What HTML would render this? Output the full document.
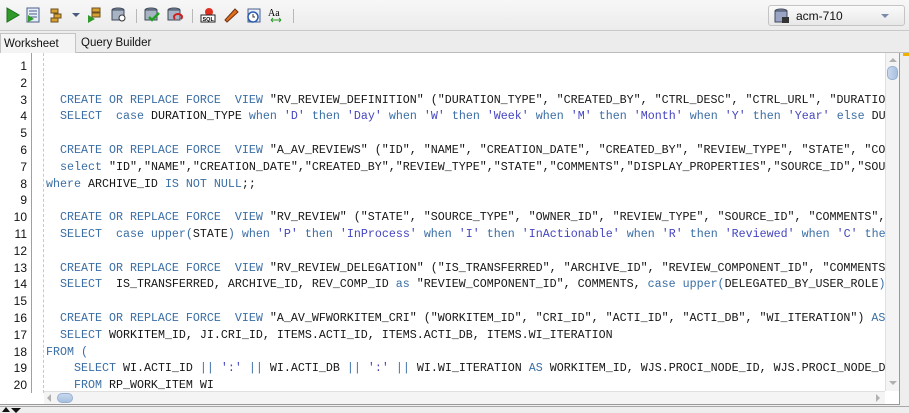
<!DOCTYPE html>
<html><head><meta charset="utf-8"><style>
*{margin:0;padding:0;box-sizing:border-box}
body{width:909px;height:413px;overflow:hidden;background:#eeeeee;font-family:"Liberation Sans",sans-serif;position:relative}
.tb{position:absolute;left:0;top:0;width:909px;height:31px;background:linear-gradient(#f7f7f7,#ececec);border-bottom:1px solid #c8c8c8}
.ic{position:absolute;top:7px;width:16px;height:16px}
.sep{position:absolute;top:9px;width:1px;height:14px;background:#b8b8b8}
.combo{position:absolute;left:768px;top:5px;width:137px;height:21px;border:1px solid #c4c4c4;border-radius:3px;background:linear-gradient(#fafafa,#e8e8e8);font-size:12px;color:#111}
.tabs{position:absolute;left:0;top:32px;width:909px;height:21px;background:#ececec;border-bottom:1px solid #bdbdbd}
.tab1{position:absolute;left:0;top:1px;width:76px;height:20px;border:1px solid #c4c4c4;border-bottom:none;background:#f4f4f4;font-size:11.5px;padding:4px 0 0 3px;color:#111}
.tab2{position:absolute;left:81px;top:5px;font-size:11.5px;color:#111}
.ed{position:absolute;left:0;top:53px;width:900px;height:352px;background:#fff;border-right:1px solid #9a9a9a;border-bottom:1px solid #9a9a9a;overflow:hidden}
.gut{position:absolute;left:0;top:0;width:32px;height:340px;border-right:1px solid #a0a0a0;background:#fff}
.dash{position:absolute;left:43px;top:0;height:340px;border-left:1px dashed #c8c8c8}
.ln{position:absolute;right:4px;width:30px;text-align:right;font-size:12px;color:#111;height:17px;line-height:17px}
.code{position:absolute;left:46px;top:0;width:839px;height:338px;overflow:hidden}
.l{position:absolute;left:0;white-space:pre;font-family:"Liberation Mono",monospace;font-size:11.67px;line-height:17px;height:17px;color:#161616}
.k{color:#3a6ea5}.s{color:#4545c0}
.vs{position:absolute;left:885px;top:0;width:14px;height:338px;background:#f4f4f4;border-left:1px solid #e0e0e0}
.hs{position:absolute;left:44px;top:338px;width:841px;height:13px;background:#f4f4f4;border-top:1px solid #e0e0e0}
</style></head><body>
<div class="tb">
<svg class="ic" style="left:5px" viewBox="0 0 16 16"><path d="M2 1 L14 8 L2 15Z" fill="#2f9a2a" stroke="#1f6e1c"/></svg>
<svg class="ic" style="left:25px" viewBox="0 0 16 16"><rect x="2" y="1" width="12" height="14" fill="#e8eef8" stroke="#4a5f8a"/><path d="M4 4h8M4 7h8M4 10h8" stroke="#4a5f8a"/><path d="M3 8 L9 12 L3 15Z" fill="#2f9a2a"/></svg>
<svg class="ic" style="left:49px" viewBox="0 0 16 16"><rect x="2" y="2" width="7" height="4" fill="#d8a030" stroke="#6a5020"/><rect x="5" y="7" width="7" height="4" fill="#d8a030" stroke="#6a5020"/><rect x="2" y="11" width="7" height="4" fill="#d8a030" stroke="#6a5020"/></svg>
<div style="position:absolute;left:72px;top:13px;border:4px solid transparent;border-top:4px solid #4a5a7a"></div>
<svg class="ic" style="left:87px" viewBox="0 0 16 16"><rect x="5" y="1" width="8" height="4" fill="#d8a030" stroke="#6a5020"/><rect x="5" y="6" width="8" height="4" fill="#d8a030" stroke="#6a5020"/><path d="M1 8 L8 12 L1 16Z" fill="#2f9a2a"/></svg>
<svg class="ic" style="left:111px" viewBox="0 0 16 16"><ellipse cx="7" cy="3" rx="6" ry="2" fill="#8090a8" stroke="#404a5a"/><rect x="1" y="3" width="12" height="10" fill="#a8b4c4" stroke="#404a5a"/><circle cx="11" cy="11" r="3" fill="#fff" stroke="#333"/></svg>
<div class="sep" style="left:136px"></div>
<svg class="ic" style="left:144px" viewBox="0 0 16 16"><ellipse cx="7" cy="3" rx="6" ry="2" fill="#8090a8" stroke="#404a5a"/><rect x="1" y="3" width="12" height="10" fill="#a8b4c4" stroke="#404a5a"/><path d="M5 10 L8 13 L15 6" stroke="#22a022" stroke-width="2.5" fill="none"/></svg>
<svg class="ic" style="left:167px" viewBox="0 0 16 16"><ellipse cx="7" cy="3" rx="6" ry="2" fill="#8090a8" stroke="#404a5a"/><rect x="1" y="3" width="12" height="10" fill="#a8b4c4" stroke="#404a5a"/><path d="M8 12 a4 3 0 1 1 6 0" stroke="#d02020" stroke-width="2" fill="none"/></svg>
<div class="sep" style="left:192px"></div>
<svg class="ic" style="left:200px" viewBox="0 0 16 16"><circle cx="9" cy="5" r="4" fill="#e03020"/><rect x="1" y="8" width="14" height="7" fill="#fff" stroke="#222"/><text x="2.5" y="14" font-size="5.5" font-family="Liberation Sans" font-weight="bold">SQL</text></svg>
<svg class="ic" style="left:224px" viewBox="0 0 16 16"><path d="M3 15 L1 13 L11 2 L14 5Z" fill="#e07020" stroke="#703010"/></svg>
<svg class="ic" style="left:246px" viewBox="0 0 16 16"><rect x="2" y="2" width="12" height="13" fill="#e8eef8" stroke="#4a5f8a"/><circle cx="7" cy="10" r="5" fill="#fff" stroke="#2a5ab0" stroke-width="1.5"/><path d="M7 7v3h2" stroke="#333" fill="none"/></svg>
<svg class="ic" style="left:268px" viewBox="0 0 16 16"><text x="0" y="9" font-size="10" font-family="Liberation Serif">Aa</text><path d="M3 13h10M3 13l2-2M3 13l2 2M13 13l-2-2M13 13l-2 2" stroke="#2a9a2a" fill="none"/></svg>
<div class="sep" style="left:293px"></div>
<div class="combo"><svg style="position:absolute;left:5px;top:2px" width="16" height="16" viewBox="0 0 16 16"><ellipse cx="7" cy="3" rx="6" ry="2" fill="#8a90b0" stroke="#404a5a"/><rect x="1" y="3" width="12" height="11" fill="#9aa4c4" stroke="#404a5a"/><rect x="8" y="9" width="7" height="6" fill="#333"/></svg><span style="position:absolute;left:27px;top:3px">acm-710</span><div style="position:absolute;left:112px;top:8px;border:4px solid transparent;border-top:4px solid #7a8aa8"></div></div>
</div>
<div class="tabs"><div class="tab1">Worksheet</div><div class="tab2">Query Builder</div></div>
<div style="position:absolute;left:903px;top:53px;width:6px;height:3px;background:#f0b000"></div>
<div class="ed">
<div class="gut">
<div class="ln" style="top:5px">1</div><div class="ln" style="top:22px">2</div><div class="ln" style="top:39px">3</div><div class="ln" style="top:55px">4</div><div class="ln" style="top:72px">5</div><div class="ln" style="top:89px">6</div><div class="ln" style="top:106px">7</div><div class="ln" style="top:123px">8</div><div class="ln" style="top:139px">9</div><div class="ln" style="top:156px">10</div><div class="ln" style="top:173px">11</div><div class="ln" style="top:190px">12</div><div class="ln" style="top:207px">13</div><div class="ln" style="top:223px">14</div><div class="ln" style="top:240px">15</div><div class="ln" style="top:257px">16</div><div class="ln" style="top:274px">17</div><div class="ln" style="top:291px">18</div><div class="ln" style="top:307px">19</div><div class="ln" style="top:324px">20</div>
</div>
<div class="dash"></div>
<div class="code">
<div class="l" style="top:39px">  <span class="k">CREATE OR REPLACE FORCE  VIEW</span> "RV_REVIEW_DEFINITION" ("DURATION_TYPE", "CREATED_BY", "CTRL_DESC", "CTRL_URL", "DURATION_</div>
<div class="l" style="top:55px">  <span class="k">SELECT  case</span> DURATION_TYPE <span class="k">when</span> <span class="s">'D'</span> <span class="k">then</span> <span class="s">'Day'</span> <span class="k">when</span> <span class="s">'W'</span> <span class="k">then</span> <span class="s">'Week'</span> <span class="k">when</span> <span class="s">'M'</span> <span class="k">then</span> <span class="s">'Month'</span> <span class="k">when</span> <span class="s">'Y'</span> <span class="k">then</span> <span class="s">'Year'</span> <span class="k">else</span> DUR</div>
<div class="l" style="top:89px">  <span class="k">CREATE OR REPLACE FORCE  VIEW</span> "A_AV_REVIEWS" ("ID", "NAME", "CREATION_DATE", "CREATED_BY", "REVIEW_TYPE", "STATE", "COM</div>
<div class="l" style="top:106px">  <span class="k">select</span> "ID","NAME","CREATION_DATE","CREATED_BY","REVIEW_TYPE","STATE","COMMENTS","DISPLAY_PROPERTIES","SOURCE_ID","SOUR</div>
<div class="l" style="top:123px"><span class="k">where</span> ARCHIVE_ID <span class="k">IS NOT NULL</span>;;</div>
<div class="l" style="top:156px">  <span class="k">CREATE OR REPLACE FORCE  VIEW</span> "RV_REVIEW" ("STATE", "SOURCE_TYPE", "OWNER_ID", "REVIEW_TYPE", "SOURCE_ID", "COMMENTS", "</div>
<div class="l" style="top:173px">  <span class="k">SELECT  case upper(</span>STATE<span class="k">)</span> <span class="k">when</span> <span class="s">'P'</span> <span class="k">then</span> <span class="s">'InProcess'</span> <span class="k">when</span> <span class="s">'I'</span> <span class="k">then</span> <span class="s">'InActionable'</span> <span class="k">when</span> <span class="s">'R'</span> <span class="k">then</span> <span class="s">'Reviewed'</span> <span class="k">when</span> <span class="s">'C'</span> <span class="k">then</span></div>
<div class="l" style="top:207px">  <span class="k">CREATE OR REPLACE FORCE  VIEW</span> "RV_REVIEW_DELEGATION" ("IS_TRANSFERRED", "ARCHIVE_ID", "REVIEW_COMPONENT_ID", "COMMENTS"</div>
<div class="l" style="top:223px">  <span class="k">SELECT</span>  IS_TRANSFERRED, ARCHIVE_ID, REV_COMP_ID <span class="k">as</span> "REVIEW_COMPONENT_ID", COMMENTS, <span class="k">case upper(</span>DELEGATED_BY_USER_ROLE<span class="k">)</span> </div>
<div class="l" style="top:257px">  <span class="k">CREATE OR REPLACE FORCE  VIEW</span> "A_AV_WFWORKITEM_CRI" ("WORKITEM_ID", "CRI_ID", "ACTI_ID", "ACTI_DB", "WI_ITERATION") <span class="k">AS</span></div>
<div class="l" style="top:274px">  <span class="k">SELECT</span> WORKITEM_ID, JI.CRI_ID, ITEMS.ACTI_ID, ITEMS.ACTI_DB, ITEMS.WI_ITERATION</div>
<div class="l" style="top:291px"><span class="k">FROM (</span></div>
<div class="l" style="top:307px">    <span class="k">SELECT</span> WI.ACTI_ID <span class="k">||</span> <span class="s">':'</span> <span class="k">||</span> WI.ACTI_DB <span class="k">||</span> <span class="s">':'</span> <span class="k">||</span> WI.WI_ITERATION <span class="k">AS</span> WORKITEM_ID, WJS.PROCI_NODE_ID, WJS.PROCI_NODE_DB</div>
<div class="l" style="top:324px">    <span class="k">FROM</span> RP_WORK_ITEM WI</div>
</div>
<div class="vs"><div style="position:absolute;left:3px;top:5px;border:4px solid transparent;border-bottom:4px solid #b0b0b0;border-top:none"></div><div style="position:absolute;left:1px;top:13px;width:11px;height:14px;border-radius:5px;background:linear-gradient(90deg,#c8d8ee,#a8c0e0);border:1px solid #98b0d0"></div><div style="position:absolute;left:3px;top:328px;border:4px solid transparent;border-top:4px solid #b0b0b0;border-bottom:none"></div></div>
<div class="hs"><div style="position:absolute;left:3px;top:2px;border:4px solid transparent;border-right:4px solid #b0b0b0;border-left:none"></div><div style="position:absolute;left:13px;top:1px;width:16px;height:10px;border-radius:5px;background:linear-gradient(#c8d8ee,#a8c0e0);border:1px solid #98b0d0"></div><div style="position:absolute;left:832px;top:2px;border:4px solid transparent;border-left:4px solid #b0b0b0;border-right:none"></div></div>
</div>
<div style="position:absolute;left:0;top:406px;width:909px;height:1px;background:#a8a8a8"></div>
<div style="position:absolute;left:2px;top:407px;border:4px solid transparent;border-bottom:5px solid #111;border-top:none"></div>
<div style="position:absolute;left:11px;top:408px;border:5px solid transparent;border-top:5px solid #111;border-bottom:none"></div>
</body></html>
